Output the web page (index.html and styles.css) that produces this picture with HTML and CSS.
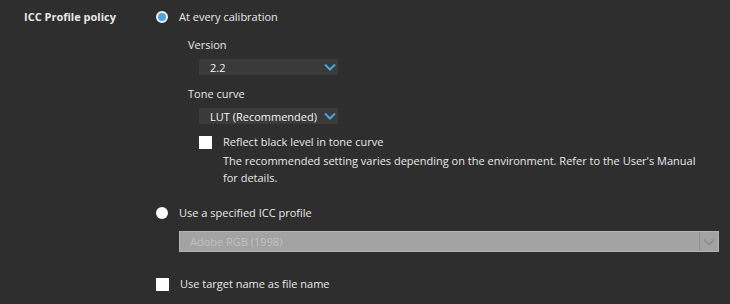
FILE: index.html
```html
<!DOCTYPE html>
<html lang="en">
<head>
  <meta charset="UTF-8" />
  <title>ICC Profile policy</title>
  <link rel="stylesheet" href="styles.css">
</head>
<body>
  <div class="setting">
    <div class="setting-label">ICC Profile policy</div>

    <div class="setting-options">
      <label class="choice">
        <span class="radio checked"></span>
        At every calibration
      </label>

      <div class="sub">
        <div class="field-label version-label">Version</div>
        <div class="select select-version">
          <span>2.2</span>
          <svg class="chevron" width="12" height="8" viewBox="0 0 12 8"><path d="M1 1.5 L6 6.5 L11 1.5" fill="none" stroke="#4aa6dc" stroke-width="2"/></svg>
        </div>

        <div class="field-label tone-label">Tone curve</div>
        <div class="select select-tone">
          <span>LUT (Recommended)</span>
          <svg class="chevron" width="12" height="8" viewBox="0 0 12 8"><path d="M1 1.5 L6 6.5 L11 1.5" fill="none" stroke="#4aa6dc" stroke-width="2"/></svg>
        </div>

        <label class="choice check-row">
          <span class="checkbox"></span>
          Reflect black level in tone curve
        </label>
        <p class="note">The recommended setting varies depending on the environment. Refer to the User's Manual<br>for details.</p>
      </div>

      <label class="choice profile-row">
        <span class="radio"></span>
        Use a specified ICC profile
      </label>

      <div class="select-disabled">
        <span>Adobe RGB (1998)</span>
        <span class="disabled-arrow">
          <svg width="12" height="8" viewBox="0 0 12 8"><path d="M1 1.5 L6 6.5 L11 1.5" fill="none" stroke="#8a8a8a" stroke-width="1.3"/></svg>
        </span>
      </div>

      <label class="choice target-row">
        <span class="checkbox"></span>
        Use target name as file name
      </label>
    </div>
  </div>
</body>
</html>
```

FILE: styles.css
```css
* {
  box-sizing: border-box;
}

body {
  margin: 0;
  background-color: #2e2e2e;
  color: #e8e8e8;
  font-family: 'Open Sans', 'Noto Sans', sans-serif;
  font-size: 11px;
  height: 304px;
  overflow: hidden;
}

.setting {
  display: flex;
  padding: 9px 0 0 24px;
}

.setting-label {
  width: 132px;
  font-weight: 700;
  line-height: 16px;
}

.setting-options {
  display: flex;
  flex-direction: column;
  flex: 1;
  padding-right: 11px;
}

.choice {
  display: flex;
  align-items: center;
  gap: 11px;
  line-height: 16px;
  height: 16px;
}

.radio {
  width: 12px;
  height: 12px;
  border-radius: 50%;
  background: #ffffff;
  flex: none;
}

.radio.checked {
  background: #4ea3e0;
  border: 2px solid #f2f6fa;
}

.checkbox {
  width: 13px;
  height: 13px;
  background: #ffffff;
  flex: none;
}

.sub {
  padding-left: 32px;
  display: flex;
  flex-direction: column;
}

.field-label {
  line-height: 16px;
}

.version-label {
  margin-top: 12px;
}

.tone-label {
  margin-top: 11px;
}

.select {
  display: flex;
  align-items: center;
  justify-content: space-between;
  background: #3a3a3a;
  height: 16px;
  margin-left: 11px;
  padding: 0 2px 0 11px;
  color: #f4f4f4;
}

.select-version {
  margin-top: 6px;
  width: 139px;
}

.select-tone {
  margin-top: 6px;
  width: 139px;
}

.chevron {
  display: block;
}

.check-row {
  margin-top: 10px;
  margin-left: 11px;
}

.note {
  margin: 2px 0 0 35px;
  line-height: 17px;
}

.profile-row {
  margin-top: 19px;
}

.select-disabled {
  display: flex;
  align-items: center;
  justify-content: space-between;
  margin: 10px 0 0 23px;
  height: 21px;
  background: #a3a3a3;
  border: 1px solid #b3b3b3;
  color: #c2c2c2;
  padding-left: 10px;
}

.disabled-arrow {
  display: flex;
  align-items: center;
  justify-content: center;
  width: 19px;
  height: 100%;
  border-left: 1px solid #8e8e8e;
}

.target-row {
  margin-top: 24px;
}
```
